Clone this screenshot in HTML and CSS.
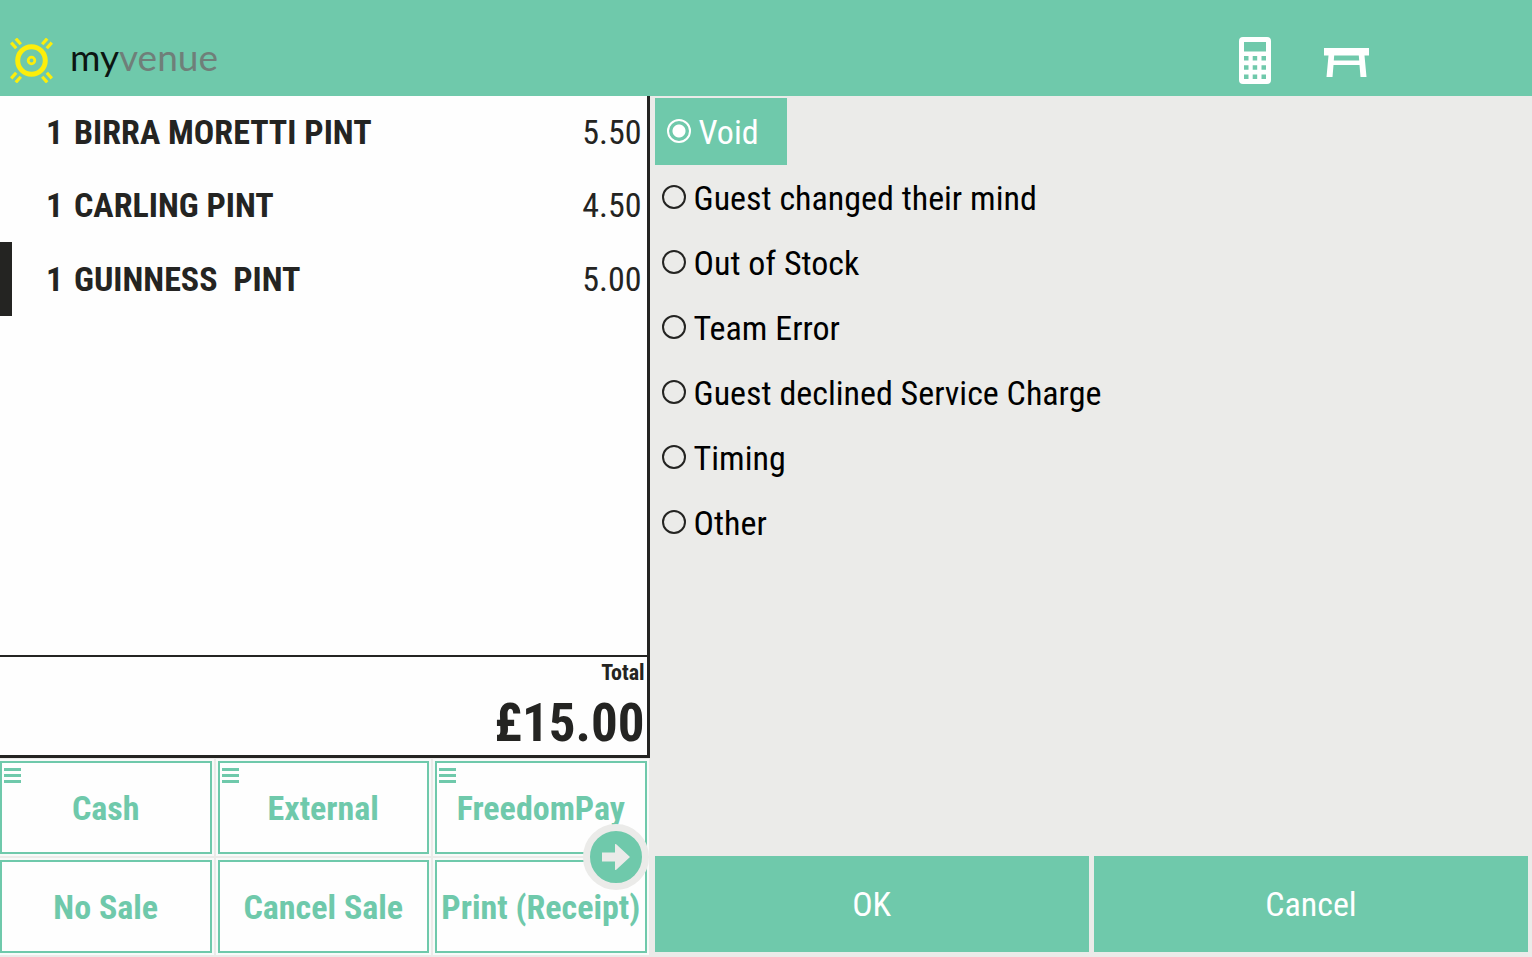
FILE: index.html
```
<!DOCTYPE html>
<html lang="en">
<head>
    <meta charset="UTF-8">
    <meta name="viewport" content="width=device-width, initial-scale=1.0">
    <title>MyVenue POS</title>
    <link rel="stylesheet" href="styles.css">
</head>
<body>
    <header class="header">
        <div class="logo">
            <svg class="logo-mark" viewBox="9 38 45 45" fill="none" stroke="#fcee0a">
                <circle cx="31.5" cy="60.5" r="13.8" stroke-width="5"/>
                <circle cx="31.5" cy="60.5" r="3.3" stroke-width="2.8"/>
                <g stroke-width="3.2">
                    <path d="M11.2 42.6l5 5.600M15.800 38.600l5 5.600"/>
                    <path d="M51.800 42.600l-5 5.600M47.200 38.600l-5 5.600"/>
                    <path d="M11.200 78.400l5-5.600M15.800 82.400l5-5.600"/>
                    <path d="M51.800 78.400l-5-5.600M47.200 82.400l-5-5.600"/>
                </g>
            </svg>
            <span class="logo-text"><span class="logo-my">my</span>venue</span>
        </div>
        <nav class="header-tools">
            <button class="tool-button" aria-label="Calculator">
                <svg width="32" height="47" viewBox="0 0 32 47" fill="#fff">
                    <path fill-rule="evenodd" d="M4 0h24q4 0 4 4v39q0 4-4 4H4q-4 0-4-4V4q0-4 4-4zM5 5v9.500h22V5zM5 19v4.500h4.500V19zM13.700 19v4.500h4.500V19zM22.500 19v4.500H27V19zM5 28.200v4.500h4.500v-4.500zM13.700 28.200v4.500h4.500v-4.500zM22.500 28.200v4.500H27v-4.500zM5 37.400v4.500h4.500v-4.500zM13.700 37.400v4.500h4.500v-4.500zM22.500 37.400v4.500H27v-4.500z"/>
                </svg>
            </button>
            <button class="tool-button" aria-label="Tables">
                <svg width="45" height="47" viewBox="0 0 45 47" fill="#fff">
                    <path fill-rule="evenodd" d="M0 11h45v7.500h-4.500l2 21.500h-6L35.500 28h-26L8.500 40h-6l2-21.500H0zM10.200 18.500l-.4 5h25.400l-.4-5z"/>
                </svg>
            </button>
        </nav>
    </header>

    <main class="main">
        <section class="sale">
            <div class="receipt">
                <ul class="items">
                    <li class="item">
                        <span class="qty">1</span>
                        <span class="name">BIRRA MORETTI PINT</span>
                        <span class="price">5.50</span>
                    </li>
                    <li class="item">
                        <span class="qty">1</span>
                        <span class="name">CARLING PINT</span>
                        <span class="price">4.50</span>
                    </li>
                    <li class="item selected">
                        <span class="qty">1</span>
                        <span class="name">GUINNESS&nbsp; PINT</span>
                        <span class="price">5.00</span>
                    </li>
                </ul>
                <div class="total">
                    <span class="total-label">Total</span>
                    <span class="total-value">£15.00</span>
                </div>
            </div>

            <div class="functions">
                <button class="function-button has-menu">Cash</button>
                <button class="function-button has-menu">External</button>
                <button class="function-button has-menu">FreedomPay</button>
                <button class="function-button">No Sale</button>
                <button class="function-button">Cancel Sale</button>
                <button class="function-button">Print (Receipt)</button>
                <button class="next-button" aria-label="Next page">
                    <svg width="28" height="26" viewBox="0 0 28 26" fill="#ebebe9">
                        <path d="M0 8.500h13V1q0-2 1.500-.5L28 13 14.500 25.500Q13 27 13 25v-7.500H0z"/>
                    </svg>
                </button>
            </div>
        </section>

        <form class="reasons">
            <div class="reason-list">
                <label class="reason"><input type="radio" name="reason" checked>Void</label>
                <label class="reason"><input type="radio" name="reason">Guest changed their mind</label>
                <label class="reason"><input type="radio" name="reason">Out of Stock</label>
                <label class="reason"><input type="radio" name="reason">Team Error</label>
                <label class="reason"><input type="radio" name="reason">Guest declined Service Charge</label>
                <label class="reason"><input type="radio" name="reason">Timing</label>
                <label class="reason"><input type="radio" name="reason">Other</label>
            </div>
            <div class="actions">
                <button type="button" class="action-button">OK</button>
                <button type="button" class="action-button">Cancel</button>
            </div>
        </form>
    </main>
</body>
</html>
```
FILE: styles.css
```
* {
    margin: 0;
    padding: 0;
    box-sizing: border-box;
}

body {
    background-color: #ebebe9;
    color: #242422;
    min-height: 100vh;
    display: flex;
    flex-direction: column;
    font-family: 'Roboto Condensed', 'Liberation Sans Narrow', Roboto, sans-serif;
    font-size: 34px;
    line-height: 40px;
}

button {
    border: none;
    font: inherit;
    cursor: pointer;
}

.header {
    background-color: #6fc9ab;
    height: 96px;
    padding: 25px 163px 0 9px;
    display: flex;
    justify-content: space-between;
    align-items: center;
}

.logo {
    display: flex;
    align-items: center;
    gap: 16px;
}

.logo-mark {
    width: 45px;
    height: 45px;
}

.logo-text {
    font-family: Lato, sans-serif;
    font-size: 37px;
    color: #6f7f79;
    padding-bottom: 8px;
}

.logo-my {
    color: #0c1512;
}

.header-tools {
    display: flex;
    gap: 53px;
}

.tool-button {
    background: none;
    display: flex;
}

.main {
    flex: 1;
    display: grid;
    grid-template-columns: 42.4% 1fr;
}

/* Left side: receipt and payment functions */
.sale {
    display: flex;
    flex-direction: column;
}

.receipt {
    flex: 1;
    display: flex;
    flex-direction: column;
    background-color: #fefefe;
    border-right: 3px solid #242422;
    border-bottom: 3px solid #242422;
}

.items {
    flex: 1;
    list-style: none;
}

.item {
    display: flex;
    align-items: center;
    height: 74px;
    padding: 0 5px 0 34px;
    border-left: 12px solid transparent;
}

.item:first-child {
    height: 72px;
}

.item.selected {
    border-left-color: #242422;
}

.qty,
.name {
    font-weight: bold;
}

.qty {
    width: 28px;
}

.name {
    flex: 1;
}

.total {
    display: flex;
    flex-direction: column;
    align-items: flex-end;
    height: 100px;
    padding: 3px 2px 0 0;
    border-top: 2px solid #242422;
    font-weight: bold;
}

.total-label {
    font-size: 22px;
    line-height: 26px;
}

.total-value {
    font-size: 53px;
    line-height: 74px;
}

.functions {
    position: relative;
    display: grid;
    grid-template-columns: repeat(3, 1fr);
    grid-auto-rows: 93px;
    gap: 6px;
    padding: 3px 3px 4px 0;
}

.function-button {
    position: relative;
    background-color: #fefefe;
    border: 2px solid #6fc9ab;
    box-shadow: 0 0 0 2px #f8faf9;
    color: #6fc9ab;
    font-weight: bold;
    white-space: nowrap;
}

.has-menu::before {
    content: '';
    position: absolute;
    top: 5px;
    left: 2px;
    width: 17px;
    height: 15px;
    background: repeating-linear-gradient(#6fc9ab 0 3px, transparent 3px 6px);
}

.next-button {
    position: absolute;
    right: 1px;
    top: calc(50% - 34px);
    width: 66px;
    height: 66px;
    display: flex;
    align-items: center;
    justify-content: center;
    background-color: #6fc9ab;
    border: 7px solid #ebebe9;
    border-radius: 50%;
}

/* Right side: void reasons */
.reasons {
    display: flex;
    flex-direction: column;
    padding: 2px 4px 5px 5px;
}

.reason-list {
    flex: 1;
    display: flex;
    flex-direction: column;
    align-items: flex-start;
    color: #000;
}

.reason {
    display: flex;
    align-items: center;
    gap: 8px;
    height: 65px;
    padding: 0 7px;
}

.reason input {
    appearance: none;
    width: 24px;
    height: 24px;
    margin-bottom: 2px;
    border: 2px solid #242422;
    border-radius: 50%;
}

.reason:has(input:checked) {
    height: 67px;
    padding: 0 28px 0 12px;
    background-color: #6fc9ab;
    color: #fff;
}

.reason input:checked {
    border-color: #fff;
    background: radial-gradient(circle, #fff 6px, transparent 7px);
}

.actions {
    display: flex;
    gap: 5px;
}

.action-button {
    flex: 1;
    height: 96px;
    background-color: #6fc9ab;
    color: #fff;
}
```
